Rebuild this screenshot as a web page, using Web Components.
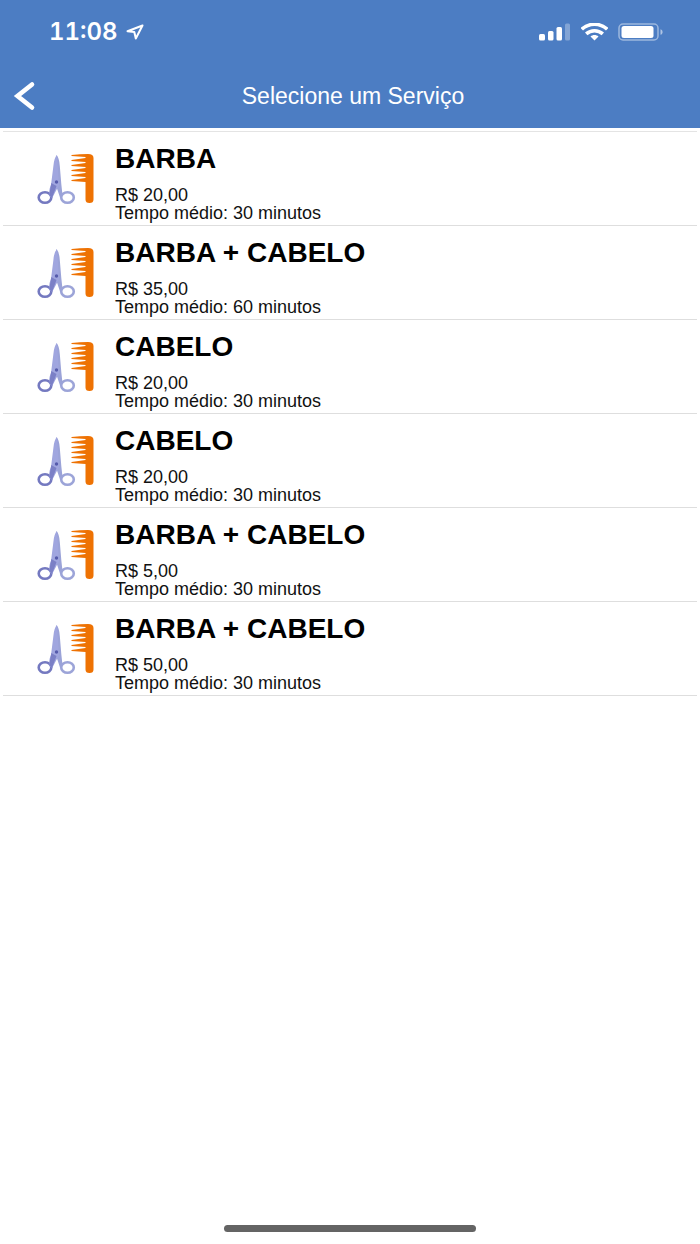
<!DOCTYPE html>
<html lang="pt-BR">
<head>
<meta charset="utf-8">
<meta name="viewport" content="width=device-width, initial-scale=1">
<title>Selecione um Serviço</title>
<style>
  body { margin: 0; background: #fff; color: #000; font-family: "Liberation Sans", Arial, sans-serif; }
</style>
</head>
<body>
<service-screen>
  <status-bar slot="top" time="11:08"></status-bar>
  <nav-header slot="top">Selecione um Serviço</nav-header>
  <service-list>
    <service-item price="R$ 20,00" duration="Tempo médio: 30 minutos">BARBA</service-item>
    <service-item price="R$ 35,00" duration="Tempo médio: 60 minutos">BARBA + CABELO</service-item>
    <service-item price="R$ 20,00" duration="Tempo médio: 30 minutos">CABELO</service-item>
    <service-item price="R$ 20,00" duration="Tempo médio: 30 minutos">CABELO</service-item>
    <service-item price="R$ 5,00" duration="Tempo médio: 30 minutos">BARBA + CABELO</service-item>
    <service-item price="R$ 50,00" duration="Tempo médio: 30 minutos">BARBA + CABELO</service-item>
  </service-list>
</service-screen>
<script>
class BaseElement extends HTMLElement {
  constructor() {
    super();
    this.attachShadow({ mode: 'open' }).innerHTML = this.constructor.markup;
  }
}

customElements.define('service-screen', class extends BaseElement {
  static markup = `
    <style>
      :host { display: flex; flex-direction: column; min-height: 100vh; }
      header { background: #4c7dc3; color: #fff; }
      main { flex: 1; padding: 3px 3px 0; }
      footer { display: flex; justify-content: center; padding-bottom: 12px; }
      .home { width: 36%; height: 7px; border-radius: 4px; background: #646464; }
    </style>
    <header><slot name="top"></slot></header>
    <main><slot></slot></main>
    <footer><div class="home"></div></footer>`;
});

customElements.define('status-bar', class extends BaseElement {
  static markup = `
    <style>
      :host { display: flex; align-items: center; justify-content: space-between; height: 64px; padding: 0 36px 0 49px; }
      div { display: flex; align-items: center; }
      time { font: 600 24px/32px Inter, sans-serif; font-variant-numeric: tabular-nums; }
      .left { gap: 8px; }
      .right { gap: 10px; }
      svg { display: block; }
    </style>
    <div class="left">
      <time></time>
      <svg width="18" height="16" viewBox="0 0 18 16" fill="none" stroke="#fff" stroke-width="2" stroke-linejoin="round"><path d="M16.5 1.5 1.5 7.2 8.3 8 9.8 14.5Z"/></svg>
    </div>
    <div class="right">
      <svg width="32" height="18" viewBox="0 0 32 18" fill="#fff">
        <rect x="0" y="11" width="6" height="6.500" rx="1.500"/>
        <rect x="9" y="8" width="5.500" height="9.500" rx="1.500"/>
        <rect x="17.500" y="4" width="5.500" height="13.500" rx="1.500"/>
        <rect x="26" y="0.500" width="5" height="17" rx="1.500" opacity=".3"/>
      </svg>
      <svg width="27" height="18" viewBox="0 0 27 18" fill="none" stroke="#fff" stroke-width="3.600">
        <path d="M.8 6.300C8-.4 19-.4 26.200 6.300"/>
        <path d="M5.200 10.900C10 6.700 17 6.700 21.800 10.900"/>
        <path d="M9.500 13.500C11.800 11.500 15.200 11.500 17.500 13.500L13.500 17.400Z" fill="#fff" stroke="none"/>
      </svg>
      <svg width="46" height="18" viewBox="0 0 46 18">
        <rect x="1" y="1" width="39" height="16" rx="4" fill="none" stroke="#fff" stroke-opacity=".45" stroke-width="1.500"/>
        <rect x="3.500" y="3" width="32" height="12" rx="2.500" fill="#fff"/>
        <path d="M42.500 6.200C45.300 7 45.300 11 42.500 11.800Z" fill="#fff" opacity=".55"/>
      </svg>
    </div>`;
  connectedCallback() {
    this.shadowRoot.querySelector('time').textContent = this.getAttribute('time');
  }
});

customElements.define('nav-header', class extends BaseElement {
  static markup = `
    <style>
      :host { display: grid; grid-template-columns: 48px 1fr 48px; align-items: center; height: 64px; }
      button { display: flex; align-items: center; width: 48px; height: 48px; padding: 0 0 0 12px; border: 0; background: none; color: inherit; }
      h1 { margin: 0; padding-left: 6px; font-size: 23px; line-height: 28px; font-weight: 400; text-align: center; }
    </style>
    <button type="button" aria-label="Voltar">
      <svg width="24" height="30" viewBox="0 0 24 30" fill="none" stroke="#fff" stroke-width="4.600" stroke-linecap="round"><path d="M20 3.500 5.500 15 20 26.500" stroke-linejoin="miter"/></svg>
    </button>
    <h1><slot></slot></h1>`;
});

customElements.define('service-list', class extends BaseElement {
  static markup = `
    <style>:host { display: block; border-top: 1px solid #e4e4e4; }</style>
    <div role="list"><slot></slot></div>`;
});

customElements.define('service-item', class extends BaseElement {
  static markup = `
    <style>
      :host { display: flex; gap: 20px; padding: 12px 16px 3px 34px; border-bottom: 1px solid #dedede; }
      svg { flex: none; margin-top: 10px; }
      h2 { margin: 0 0 12px; font-size: 28px; line-height: 30px; font-weight: 700; }
      p { margin: 0; font-size: 18px; line-height: 18px; color: #111; }
    </style>
    <svg width="58" height="52" viewBox="0 0 58 52" aria-hidden="true">
      <g fill="none" stroke-width="2.600">
        <ellipse cx="8" cy="43.500" rx="6.300" ry="5.300" stroke="#7479c0"/>
        <ellipse cx="30.500" cy="43.500" rx="6.300" ry="5.300" stroke="#9ca4d8"/>
      </g>
      <path d="M19.500 1Q22.300 4 22.800 12L24.300 30 25.500 41 23 43.500 18.500 30 15.500 25Z" fill="#9ba3d8"/>
      <path d="M20 1Q17 4 16.400 12L14 31Q11.500 36 12.600 42L15.200 44 22 31Z" fill="#a0a6df"/>
      <path d="M14.300 29 12.200 41 15 44 19.500 32Z" fill="#7b80c6"/>
      <circle cx="19.500" cy="28" r="1.700" fill="#555bab"/>
      <path d="M34.500 1Q43 0 51 0Q56.500 0 56.500 4V45.500Q56.500 49 52.500 49Q48.500 49 48.500 45.500V28L34.500 27V26L48.500 24V23L34.500 22V21L48.500 19V18L34.500 17V16L48.500 14V13L34.500 12V11L48.500 9V8L34.500 7V6L48.500 4V3L34.500 2Z" fill="#ee7203"/>
    </svg>
    <div>
      <h2><slot></slot></h2>
      <p class="price"></p>
      <p class="duration"></p>
    </div>`;
  connectedCallback() {
    this.setAttribute('role', 'listitem');
    for (const name of ['price', 'duration'])
      this.shadowRoot.querySelector('.' + name).textContent = this.getAttribute(name);
  }
});
</script>
</body>
</html>
